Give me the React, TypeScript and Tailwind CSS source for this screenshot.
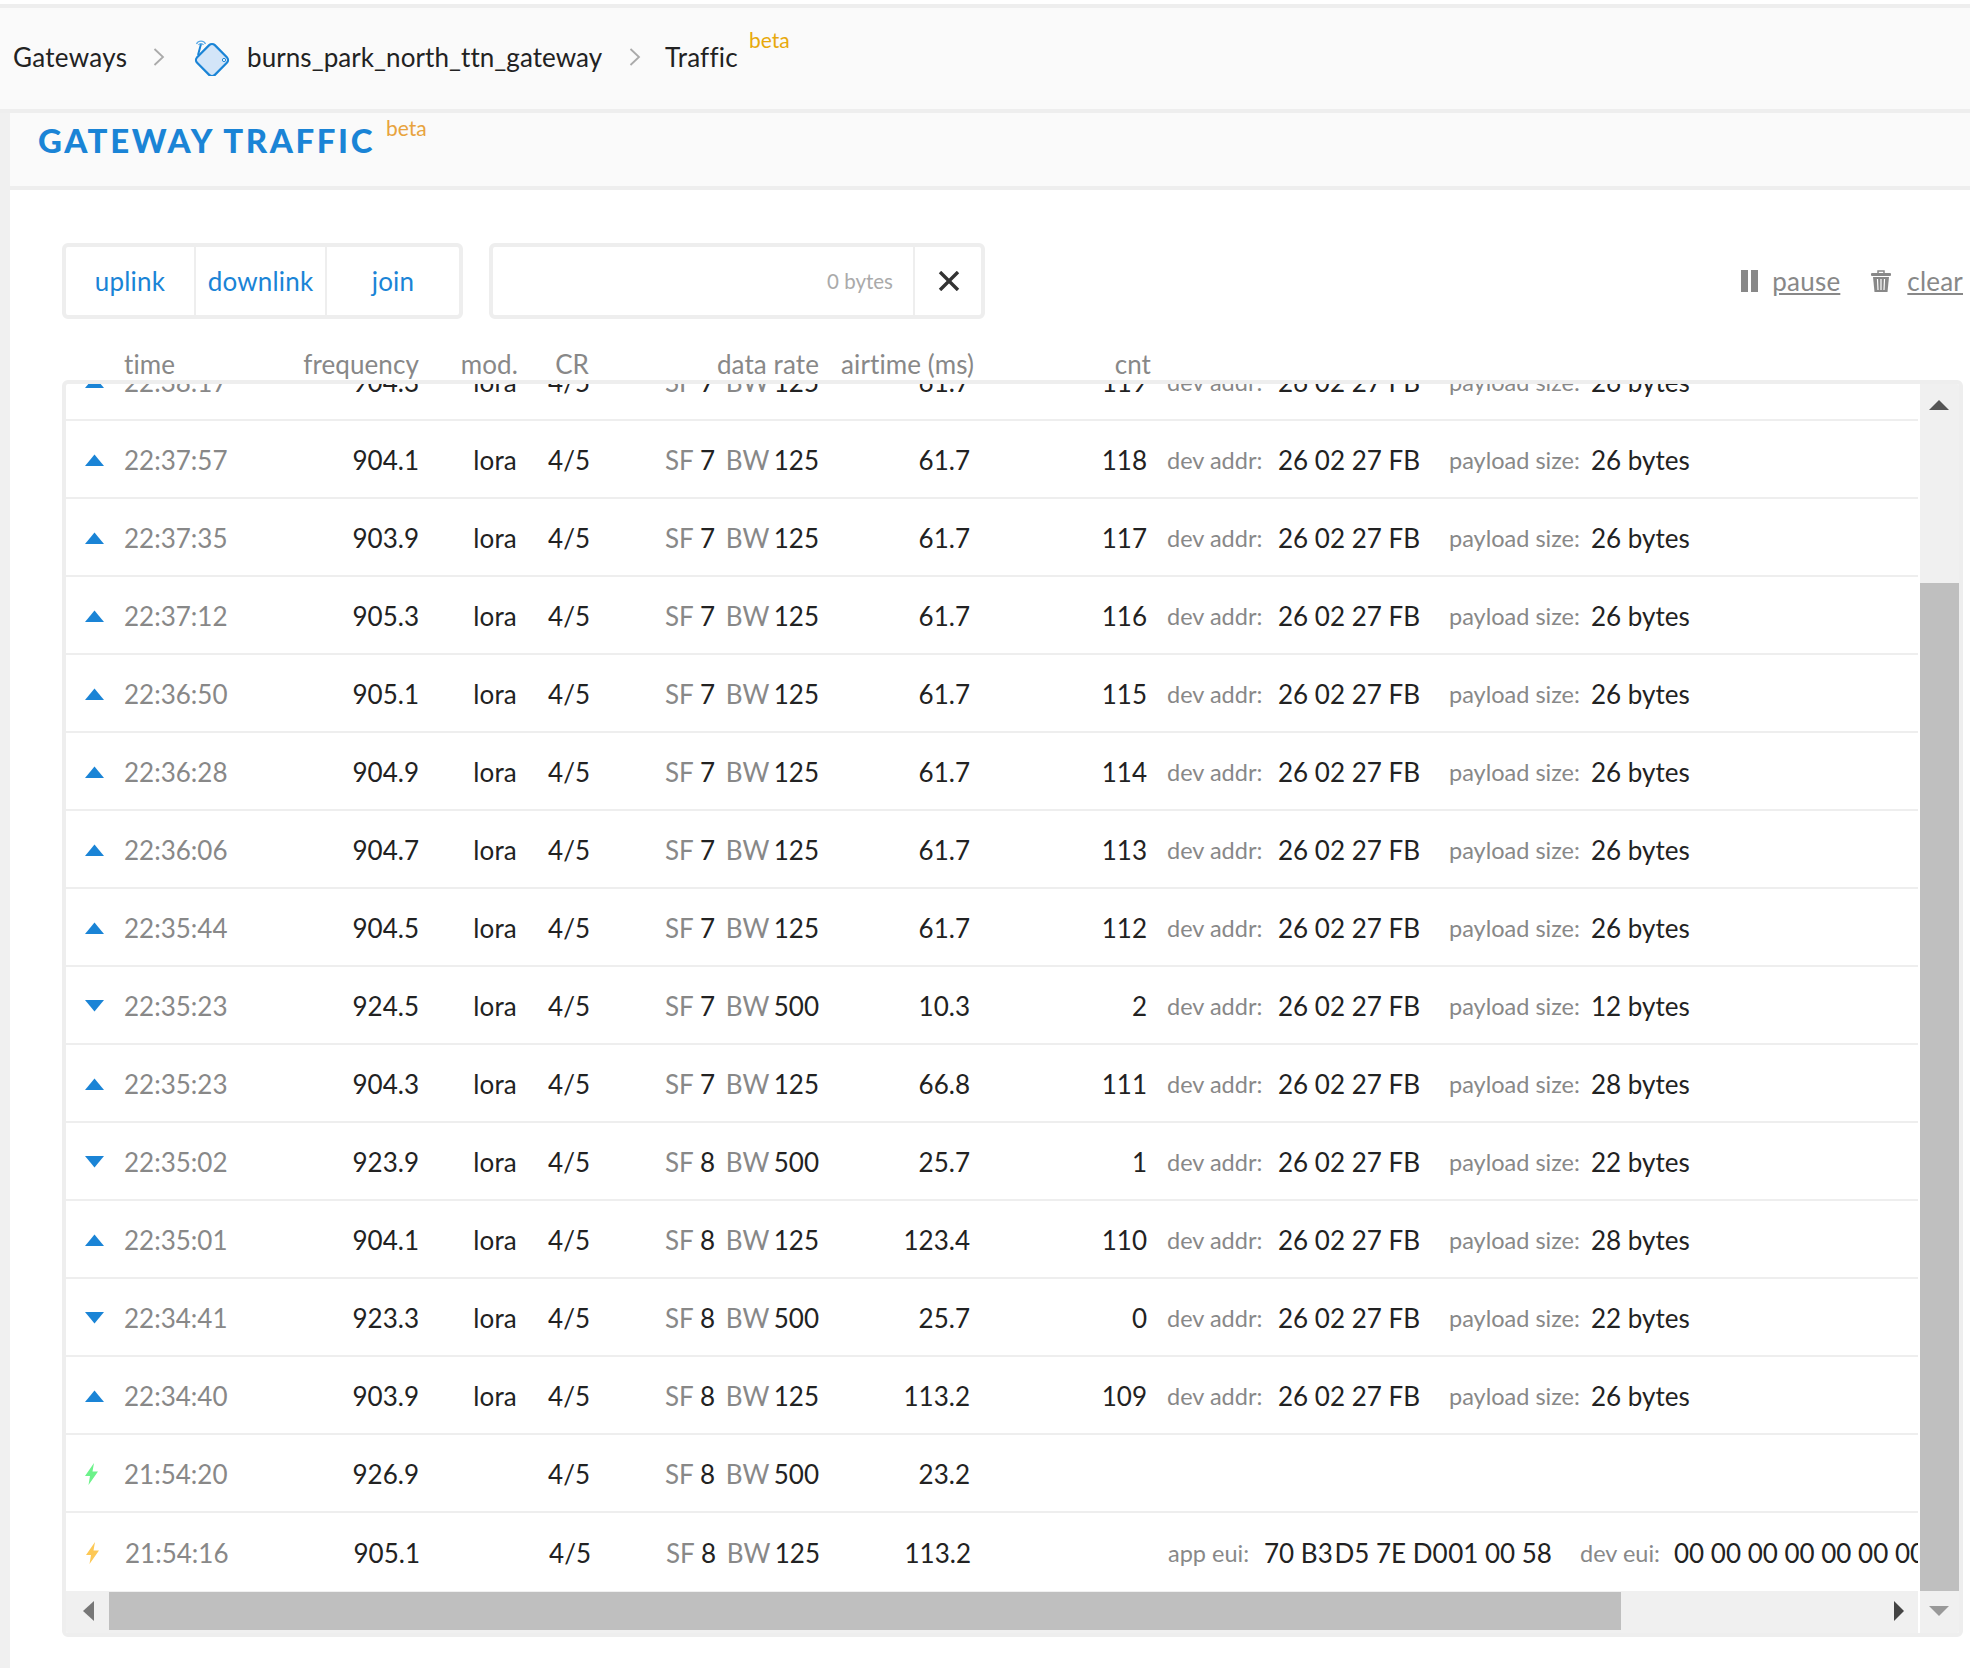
import React from 'react';

type Kind = 'up' | 'down' | 'joinAccept' | 'joinRequest';

interface Row {
  kind: Kind;
  time: string;
  freq: string;
  mod?: string;
  sf: number;
  bw: number;
  airtime: string;
  cnt?: number;
  size?: number;
}

const rows: Row[] = [
  { kind: 'up', time: '22:38:17', freq: '904.3', mod: 'lora', sf: 7, bw: 125, airtime: '61.7', cnt: 119, size: 26 },
  { kind: 'up', time: '22:37:57', freq: '904.1', mod: 'lora', sf: 7, bw: 125, airtime: '61.7', cnt: 118, size: 26 },
  { kind: 'up', time: '22:37:35', freq: '903.9', mod: 'lora', sf: 7, bw: 125, airtime: '61.7', cnt: 117, size: 26 },
  { kind: 'up', time: '22:37:12', freq: '905.3', mod: 'lora', sf: 7, bw: 125, airtime: '61.7', cnt: 116, size: 26 },
  { kind: 'up', time: '22:36:50', freq: '905.1', mod: 'lora', sf: 7, bw: 125, airtime: '61.7', cnt: 115, size: 26 },
  { kind: 'up', time: '22:36:28', freq: '904.9', mod: 'lora', sf: 7, bw: 125, airtime: '61.7', cnt: 114, size: 26 },
  { kind: 'up', time: '22:36:06', freq: '904.7', mod: 'lora', sf: 7, bw: 125, airtime: '61.7', cnt: 113, size: 26 },
  { kind: 'up', time: '22:35:44', freq: '904.5', mod: 'lora', sf: 7, bw: 125, airtime: '61.7', cnt: 112, size: 26 },
  { kind: 'down', time: '22:35:23', freq: '924.5', mod: 'lora', sf: 7, bw: 500, airtime: '10.3', cnt: 2, size: 12 },
  { kind: 'up', time: '22:35:23', freq: '904.3', mod: 'lora', sf: 7, bw: 125, airtime: '66.8', cnt: 111, size: 28 },
  { kind: 'down', time: '22:35:02', freq: '923.9', mod: 'lora', sf: 8, bw: 500, airtime: '25.7', cnt: 1, size: 22 },
  { kind: 'up', time: '22:35:01', freq: '904.1', mod: 'lora', sf: 8, bw: 125, airtime: '123.4', cnt: 110, size: 28 },
  { kind: 'down', time: '22:34:41', freq: '923.3', mod: 'lora', sf: 8, bw: 500, airtime: '25.7', cnt: 0, size: 22 },
  { kind: 'up', time: '22:34:40', freq: '903.9', mod: 'lora', sf: 8, bw: 125, airtime: '113.2', cnt: 109, size: 26 },
  { kind: 'joinAccept', time: '21:54:20', freq: '926.9', sf: 8, bw: 500, airtime: '23.2' },
];

const KindIcon = ({ kind }: { kind: Kind }) => {
  if (kind === 'up' || kind === 'down') {
    return (
      <div className="flex w-[58px] shrink-0 justify-center pr-[2px]">
        <svg width="19" height="12" viewBox="0 0 19 12" className="block">
          <path d={kind === 'up' ? 'M9.5 0.5 L19 12 L0 12 Z' : 'M0 0 L19 0 L9.5 11.5 Z'} fill="#1a84d6" />
        </svg>
      </div>
    );
  }
  return (
    <div className="flex w-[58px] shrink-0 justify-center pr-[7px]">
      <svg width="13" height="22" viewBox="0 0 13 22" className="block">
        <path d="M9 0 L0 13 L5 13 L3.5 22 L13 8.5 L7.5 8.5 Z" fill={kind === 'joinAccept' ? '#6cf28a' : '#fdc855'} />
      </svg>
    </div>
  );
};

const Chevron = () => (
  <svg width="12" height="18" viewBox="0 0 12 18" className="block">
    <path d="M1.5 1 L10 9 L1.5 17" fill="none" stroke="#aaa" strokeWidth="1.8" />
  </svg>
);

const GatewayLogo = () => (
  <svg width="38" height="38" viewBox="0 0 38 38" className="block">
    <path d="M5 17 L8 6" stroke="#1a84d6" strokeWidth="2" fill="none" />
    <path d="M3.5 6 A5 5 0 0 1 12.5 6 M5.5 7 A3 3 0 0 1 10.5 7" stroke="#5aa9e6" strokeWidth="1.3" fill="none" />
    <rect x="6.5" y="9.5" width="25" height="25" rx="4" transform="rotate(45 19 22)" fill="#d3e5f8" stroke="#1a84d6" strokeWidth="2.2" />
    <circle cx="31" cy="22" r="1.6" fill="#fff" stroke="#1a84d6" strokeWidth="1" />
  </svg>
);

const TrashIcon = () => (
  <svg width="22" height="22" viewBox="0 0 22 22" className="block">
    <path d="M8 3 V1 H14 V3" fill="none" stroke="#888" strokeWidth="1.5" />
    <rect x="1" y="3" width="20" height="3" rx="1" fill="#888" />
    <path d="M3 7 H19 L17.5 22 H4.5 Z" fill="#888" />
    <path d="M7.5 9 L8 20 M11 9 V20 M14.5 9 L14 20" stroke="#fff" strokeWidth="1.2" />
  </svg>
);

const ScrollArrow = ({ d, fill, w, h }: { d: string; fill: string; w: number; h: number }) => (
  <svg width={w} height={h} viewBox={`0 0 ${w} ${h}`} className="block">
    <path d={d} fill={fill} />
  </svg>
);

const Tab = ({ label, width, last }: { label: string; width: string; last?: boolean }) => (
  <div className={`flex items-center justify-center tracking-[0.2px] text-[#1a84d6] ${width} ${last ? '' : 'border-r-2 border-[#eee]'}`}>{label}</div>
);

const DataRate = ({ sf, bw }: { sf: number; bw: number }) => (
  <div className="ml-[75px] flex w-[154px] shrink-0 whitespace-nowrap">
    <span className="w-[35px] text-[#888]">SF</span>
    <span className="w-[26px]">{sf}</span>
    <span className="w-[48px] text-[#888]">BW</span>
    <span>{bw}</span>
  </div>
);

const TrafficRow = ({ row }: { row: Row }) => (
  <div className="flex h-[78px] items-center border-b-2 border-[#eee] pt-[1px] text-[#222]">
    <KindIcon kind={row.kind} />
    <div className="w-[174px] text-[#888]">{row.time}</div>
    <div className="w-[121px] text-right">{row.freq}</div>
    <div className="w-[98px] text-right tracking-[0.2px]">{row.mod}</div>
    <div className="w-[73px] text-right">4/5</div>
    <DataRate sf={row.sf} bw={row.bw} />
    <div className="w-[151px] text-right">{row.airtime}</div>
    {row.cnt !== undefined && (
      <>
        <div className="w-[177px] text-right">{row.cnt}</div>
        <div className="ml-[20px] w-[111px] text-[23.5px] text-[#888]">dev addr:</div>
        <div className="w-[171px]">26 02 27 FB</div>
        <div className="w-[142px] text-[23.5px] text-[#888]">payload size:</div>
        <div>{row.size} bytes</div>
      </>
    )}
  </div>
);

const JoinRequestRow = () => (
  <div className="flex h-[79px] w-[2200px] items-center pt-[1px] pl-[1px] text-[#222]">
    <KindIcon kind="joinRequest" />
    <div className="w-[174px] text-[#888]">21:54:16</div>
    <div className="w-[121px] text-right">905.1</div>
    <div className="w-[98px]" />
    <div className="w-[73px] text-right">4/5</div>
    <DataRate sf={8} bw={125} />
    <div className="w-[151px] text-right">113.2</div>
    <div className="ml-[197px] w-[96px] text-[23.5px] text-[#888]">app eui:</div>
    <div className="w-[316px] whitespace-nowrap">
      70 B3 <span className="ml-[-5px]">D5 7E D0</span> <span className="ml-[-6px]">01 00 58</span>
    </div>
    <div className="w-[94px] text-[23.5px] text-[#888]">dev eui:</div>
    <div className="whitespace-nowrap">00 00 00 00 00 00 00 00</div>
  </div>
);

export default function App() {
  return (
    <div className="h-[1672px] w-[1970px] overflow-hidden bg-white pt-1 font-[Lato,sans-serif] text-[26px] leading-[32px]">
      {/* breadcrumbs */}
      <div className="relative flex h-[109px] items-center border-y-4 border-[#eee] bg-[#fafafa] pb-[4px] text-[#222]">
        <span className="ml-[13px] w-[140px] tracking-[0.3px]">Gateways</span>
        <Chevron />
        <div className="ml-[28px] w-[54px]">
          <GatewayLogo />
        </div>
        <span className="w-[382px] tracking-[0.07px]">burns_park_north_ttn_gateway</span>
        <Chevron />
        <span className="ml-[24px] tracking-[0.2px]">Traffic</span>
        <span className="absolute top-[16px] left-[749px] text-[21px] text-[#e8a90c]">beta</span>
      </div>

      <div className="h-[1555px] border-l-[10px] border-[#f0f0f0]">
        {/* title */}
        <div className="relative h-[77px] border-b-4 border-[#eee] bg-[#fafafa] pt-[4px] pl-[28px]">
          <span className="text-[33px] leading-[46px] font-black tracking-[2.6px] text-[#1a84d6]">GATEWAY TRAFFIC</span>
          <span className="absolute top-[-1px] left-[376px] text-[21px] text-[#e8a33d]">beta</span>
        </div>

        <div className="ml-[52px] w-[1901px] pt-[53px]">
          {/* toolbar */}
          <div className="flex h-[76px] items-stretch">
            <div className="flex w-[401px] rounded-md border-4 border-[#eee]">
              <Tab label="uplink" width="w-[130px]" />
              <Tab label="downlink" width="w-[131px]" />
              <Tab label="join" width="flex-1" last />
            </div>
            <div className="ml-[26px] flex w-[496px] rounded-md border-4 border-[#eee]">
              <div className="flex flex-1 items-center justify-end border-r-2 border-[#eee] pr-[20px] text-[20.5px] text-[#aaa]">0 bytes</div>
              <div className="flex w-[66px] items-center justify-center pl-[1px]">
                <svg width="22" height="20" viewBox="0 0 22 20" className="block">
                  <path d="M2 1 L20 19 M20 1 L2 19" stroke="#333" strokeWidth="3.4" fill="none" />
                </svg>
              </div>
            </div>
            <div className="ml-auto flex items-center text-[#888]">
              <div className="flex h-[22px] w-[17px] justify-between">
                <div className="w-[7px] bg-[#888]" />
                <div className="w-[7px] bg-[#888]" />
              </div>
              <span className="ml-[14px] tracking-[0.2px] underline decoration-2 underline-offset-2">pause</span>
              <div className="ml-[30px]">
                <TrashIcon />
              </div>
              <span className="ml-[15px] tracking-[0.2px] underline decoration-2 underline-offset-2">clear</span>
            </div>
          </div>

          {/* column heads */}
          <div className="flex h-[61px] items-end tracking-[0.1px] whitespace-nowrap text-[#888]">
            <div className="ml-[62px] w-[174px]">time</div>
            <div className="w-[121px] text-right">frequency</div>
            <div className="w-[99px] text-right">mod.</div>
            <div className="w-[71px] text-right">CR</div>
            <div className="w-[230px] text-right">data rate</div>
            <div className="w-[155px] text-right">airtime (ms)</div>
            <div className="w-[177px] text-right">cnt</div>
          </div>

          {/* traffic panel */}
          <div className="flex h-[1257px] overflow-hidden rounded-md border-4 border-[#eee]">
            <div className="flex min-w-0 flex-1 flex-col">
              <div className="min-h-0 flex-1 overflow-hidden">
                <div className="mt-[-41px]">
                  {rows.map((row) => (
                    <TrafficRow key={row.time + row.freq} row={row} />
                  ))}
                  <JoinRequestRow />
                </div>
              </div>
              <div className="flex h-[42px] items-center bg-[#f0f0f0] pb-[2px]">
                <div className="flex h-[38px] w-[43px] items-center justify-end pr-[15px]">
                  <ScrollArrow d="M11 0 L11 20 L0 10 Z" fill="#777" w={11} h={20} />
                </div>
                <div className="h-[38px] w-[1512px] bg-[#bfbfbf]" />
                <div className="ml-auto pr-[14px]">
                  <ScrollArrow d="M0 0 L10 10 L0 20 Z" fill="#444" w={10} h={20} />
                </div>
              </div>
            </div>
            <div className="flex w-[41px] flex-col border-l-2 border-white bg-[#f0f0f0]">
              <div className="flex h-[199px] justify-center pt-[16px] pr-[2px]">
                <ScrollArrow d="M10 0 L20 10 L0 10 Z" fill="#555" w={20} h={10} />
              </div>
              <div className="flex-1 bg-[#bfbfbf]" />
              <div className="flex h-[42px] justify-center pt-[15px] pr-[2px]">
                <ScrollArrow d="M0 0 L20 0 L10 10 Z" fill="#999" w={20} h={10} />
              </div>
            </div>
          </div>
        </div>
      </div>
    </div>
  );
}
